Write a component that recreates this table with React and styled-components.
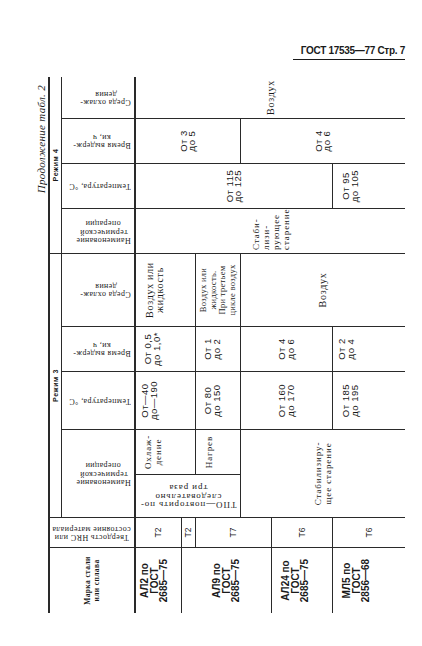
import React from "react";
import styled, { createGlobalStyle } from "styled-components";

const INK = "#1a1a1a";
const LINE = "#2a2a2a";

const GlobalStyle = createGlobalStyle`
  html, body {
    margin: 0;
    padding: 0;
    background: #ffffff;
  }
  body {
    overflow: hidden;
    color: ${INK};
    font-family: "Liberation Serif", "Times New Roman", serif;
  }
`;

const Page = styled.div`
  width: 422px;
  height: 646px;
  display: flex;
  flex-direction: column;
`;

const RunningHead = styled.div`
  align-self: flex-end;
  width: 112px;
  margin: 45px 17px 0 0;
  padding-bottom: 3px;
  border-bottom: 1.5px solid ${INK};
  text-align: right;
  font-family: "Liberation Sans", Arial, sans-serif;
  font-weight: bold;
  font-size: 10px;
  line-height: 11px;
  letter-spacing: -0.3px;
  white-space: nowrap;
`;

// the table is set landscape and turned onto the portrait page
const Sheet = styled.div`
  width: 370px;
  height: 536px;
  margin: 16.5px 0 0 35px;
  overflow: hidden;
`;

const Landscape = styled.div`
  width: 536px;
  height: 370px;
  transform-origin: 0 0;
  transform: translateY(536px) rotate(-90deg);
  display: flex;
  flex-direction: column;
`;

const Caption = styled.div`
  height: 13px;
  padding-right: 8px;
  text-align: right;
  font-style: italic;
  font-size: 11px;
  line-height: 12px;
  letter-spacing: 0.3px;
`;

const Table = styled.div`
  display: flex;
  height: 357px;
  box-sizing: border-box;
  border-top: 2px solid ${LINE};
`;

const Column = styled.div`
  box-sizing: border-box;
  width: ${(p) => p.$w}px;
  flex: none;
  display: flex;
  flex-direction: column;
  & + & {
    border-left: 1px solid ${LINE};
  }
`;

const Group = styled.div`
  display: flex;
  flex-direction: column;
  border-left: 1px solid ${LINE};
`;

const GroupLabel = styled.div`
  height: 12px;
  box-sizing: border-box;
  border-bottom: 1px solid ${LINE};
  display: flex;
  align-items: center;
  justify-content: center;
  font-family: "Liberation Sans", Arial, sans-serif;
  font-weight: bold;
  font-size: 7px;
  letter-spacing: 0.6px;
`;

const GroupColumns = styled.div`
  display: flex;
  flex: 1;
`;

const HeadCell = styled.div`
  box-sizing: border-box;
  height: ${(p) => p.$h}px;
  flex: none;
  border-bottom: 2px solid ${LINE};
  display: flex;
  justify-content: center;
  align-items: ${(p) => (p.$pt != null ? "flex-start" : "flex-end")};
  padding: ${(p) => (p.$pt != null ? `${p.$pt}px 0 0` : "0 0 3px")};
`;

const HeadLabel = styled.div`
  writing-mode: vertical-rl;
  transform: rotate(180deg);
  white-space: nowrap;
  text-align: center;
  font-size: ${(p) => p.$size || 8}px;
  line-height: ${(p) => (p.$size ? p.$size - 0.5 : 8.5)}px;
  letter-spacing: ${(p) => (p.$size ? 0.9 : 0.4)}px;
`;

const MarkHead = styled.div`
  text-align: center;
  white-space: nowrap;
  font-weight: bold;
  font-size: 7.5px;
  line-height: 9px;
  letter-spacing: 0.4px;
`;

const Cell = styled.div`
  box-sizing: border-box;
  height: ${(p) => p.$h}px;
  flex: none;
  border-bottom: 1px solid ${LINE};
  display: flex;
  justify-content: ${(p) => (p.$left ? "flex-start" : "center")};
  align-items: ${(p) => (p.$pt != null ? "flex-start" : "center")};
  padding: ${(p) => p.$pt || 0}px 0 0 ${(p) => (p.$left ? 3 : 0)}px;
  text-align: ${(p) => (p.$left ? "left" : "center")};
  white-space: nowrap;
  &:last-child {
    border-bottom: none;
  }
`;

const OpGrid = styled.div`
  flex: 1;
  display: grid;
  grid-template-columns: 43px 1fr;
  grid-template-rows: 60px 45px 1fr;
`;

const OpCell = styled.div`
  grid-area: ${(p) => p.$area};
  box-sizing: border-box;
  border-right: ${(p) => (p.$right ? `1px solid ${LINE}` : "none")};
  border-bottom: ${(p) => (p.$bottom ? `1px solid ${LINE}` : "none")};
  display: flex;
  justify-content: center;
  align-items: ${(p) => (p.$pt != null ? "flex-start" : "center")};
  padding-top: ${(p) => p.$pt || 0}px;
  text-align: center;
  white-space: nowrap;
`;

const Range = styled.div`
  font-family: "Liberation Sans", Arial, sans-serif;
  font-size: 9.5px;
  line-height: 8.5px;
  letter-spacing: 0.5px;
`;

const Medium = styled.div`
  font-size: ${(p) => (p.$small ? 8.5 : 10)}px;
  line-height: ${(p) => (p.$small ? 9.5 : 10)}px;
  letter-spacing: ${(p) => (p.$small ? 0.3 : 0.7)}px;
`;

const Grade = styled.div`
  font-family: "Liberation Sans Narrow", "Liberation Sans", Arial, sans-serif;
  font-weight: bold;
  font-size: 10px;
  line-height: 9.5px;
`;

const Temper = styled.div`
  font-family: "Liberation Sans", Arial, sans-serif;
  font-size: 8.5px;
  line-height: 9px;
`;

const Operation = styled.div`
  font-size: 9px;
  line-height: 10px;
  letter-spacing: 0.9px;
`;

const headers = {
  op: (
    <>
      Наименование
      <br />
      термической
      <br />
      операции
    </>
  ),
  temp: <>Температура, °С</>,
  time: (
    <>
      Время выдерж-
      <br />
      ки, ч
    </>
  ),
  medium: (
    <>
      Среда охлаж-
      <br />
      дения
    </>
  ),
};

function Head({ kind }) {
  return (
    <HeadCell $h={74}>
      <HeadLabel>{headers[kind]}</HeadLabel>
    </HeadCell>
  );
}

export default function App() {
  return (
    <Page>
      <GlobalStyle />
      <RunningHead>ГОСТ 17535—77 Стр. 7</RunningHead>
      <Sheet>
        <Landscape>
          <Caption>Продолжение табл. 2</Caption>
          <Table>
            <Column $w={65}>
              <HeadCell $h={86} $pt={33}>
                <MarkHead>
                  Марка стали
                  <br />
                  или сплава
                </MarkHead>
              </HeadCell>
              <Cell $h={46} $pt={4}>
                <Grade>АЛ2 по<br />ГОСТ<br />2685—75</Grade>
              </Cell>
              <Cell $h={90}>
                <Grade>АЛ9 по<br />ГОСТ<br />2685—75</Grade>
              </Cell>
              <Cell $h={61} $pt={9}>
                <Grade>АЛ24 по<br />ГОСТ<br />2685—75</Grade>
              </Cell>
              <Cell $h={72} $pt={9}>
                <Grade>МЛ5 по<br />ГОСТ<br />2856—68</Grade>
              </Cell>
            </Column>

            <Column $w={30}>
              <HeadCell $h={86}>
                <HeadLabel>
                  Твердость HRC или
                  <br />
                  состояние материала
                </HeadLabel>
              </HeadCell>
              <Cell $h={46}><Temper>Т2</Temper></Cell>
              <Cell $h={14}><Temper>Т2</Temper></Cell>
              <Cell $h={76}><Temper>Т7</Temper></Cell>
              <Cell $h={61}><Temper>Т6</Temper></Cell>
              <Cell $h={72}><Temper>Т6</Temper></Cell>
            </Column>

            <Group>
              <GroupLabel>Режим 3</GroupLabel>
              <GroupColumns>
                <Column $w={87}>
                  <Head kind="op" />
                  <OpGrid>
                    <OpCell $area="1 / 1 / 3 / 2" $right $bottom>
                      <HeadLabel $size={9}>
                        ТПО—повторить по-
                        <br />
                        следовательно
                        <br />
                        три раза
                      </HeadLabel>
                    </OpCell>
                    <OpCell $area="1 / 2 / 2 / 3" $bottom $pt={7}>
                      <Operation>Охлаж-<br />дение</Operation>
                    </OpCell>
                    <OpCell $area="2 / 2 / 3 / 3" $bottom $pt={8}>
                      <Operation>Нагрев</Operation>
                    </OpCell>
                    <OpCell $area="3 / 1 / 4 / 3">
                      <Operation>Стабилизиру-<br />щее старение</Operation>
                    </OpCell>
                  </OpGrid>
                </Column>
                <Column $w={58}>
                  <Head kind="temp" />
                  <Cell $h={60} $pt={5}><Range>От—40<br />до—190</Range></Cell>
                  <Cell $h={45} $pt={8}><Range>От 80<br />до 150</Range></Cell>
                  <Cell $h={92}><Range>От 160<br />до 170</Range></Cell>
                  <Cell $h={72} $pt={9}><Range>От 185<br />до 195</Range></Cell>
                </Column>
                <Column $w={45}>
                  <Head kind="time" />
                  <Cell $h={60} $pt={8}><Range>От 0,5<br />до 1,0*</Range></Cell>
                  <Cell $h={45} $pt={8}><Range>От 1<br />до 2</Range></Cell>
                  <Cell $h={92}><Range>От 4<br />до 6</Range></Cell>
                  <Cell $h={72} $pt={5}><Range>От 2<br />до 4</Range></Cell>
                </Column>
                <Column $w={73}>
                  <Head kind="medium" />
                  <Cell $h={60} $pt={9}>
                    <Medium>Воздух или<br />жидкость</Medium>
                  </Cell>
                  <Cell $h={45} $pt={3}>
                    <Medium $small>
                      Воздух или<br />жидкость.<br />При третьем<br />цикле воздух
                    </Medium>
                  </Cell>
                  <Cell $h={164}><Medium>Воздух</Medium></Cell>
                </Column>
              </GroupColumns>
            </Group>

            <Group>
              <GroupLabel>Режим 4</GroupLabel>
              <GroupColumns>
                <Column $w={44}>
                  <Head kind="op" />
                  <Cell $h={269} $left>
                    <Operation>Стаби-<br />лизи-<br />рующее<br />старение</Operation>
                  </Cell>
                </Column>
                <Column $w={45}>
                  <Head kind="temp" />
                  <Cell $h={197}><Range>От 115<br />до 125</Range></Cell>
                  <Cell $h={72} $pt={9}><Range>От 95<br />до 105</Range></Cell>
                </Column>
                <Column $w={45}>
                  <Head kind="time" />
                  <Cell $h={105}><Range>От 3<br />до 5</Range></Cell>
                  <Cell $h={164}><Range>От 4<br />до 6</Range></Cell>
                </Column>
                <Column $w={42}>
                  <Head kind="medium" />
                  <Cell $h={269}><Medium>Воздух</Medium></Cell>
                </Column>
              </GroupColumns>
            </Group>
          </Table>
        </Landscape>
      </Sheet>
    </Page>
  );
}
